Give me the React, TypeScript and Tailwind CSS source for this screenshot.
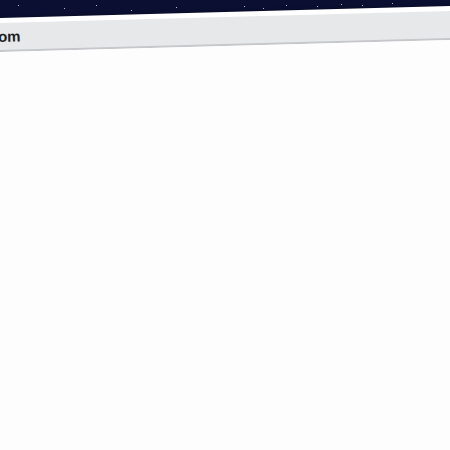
import React from 'react'

const stars = [
  { x: 18, y: 5 }, { x: 64, y: 8 }, { x: 96, y: 5 }, { x: 131, y: 10 },
  { x: 176, y: 7 }, { x: 244, y: 6 }, { x: 263, y: 8 }, { x: 286, y: 5 },
  { x: 317, y: 6 }, { x: 341, y: 4 }, { x: 362, y: 5 }, { x: 392, y: 3 },
]

function App() {
  return (
    <div className="relative h-[450px] w-[450px] overflow-hidden bg-[#0b1033] pt-[12px]" style={{ fontFamily: '"Liberation Sans", Arial, sans-serif' }}>
      {stars.map((s, i) => (
        <div key={i} className="absolute h-px w-px bg-white/70" style={{ left: s.x, top: s.y }} />
      ))}
      <div className="-ml-[75px] w-[600px] origin-top rotate-[-1.53deg] bg-white pt-[5px] shadow-[0_-1px_3px_rgba(0,0,0,0.3)]">
        <div className="flex h-[29px] items-center border-b-2 border-[#c6c7ca] bg-[#e7e8ea]">
          <div className="flex w-[95px] shrink-0 justify-end">
            <span className="whitespace-nowrap text-[15px] font-bold leading-none text-[#1e1e1e]">yourwebsite.com</span>
          </div>
        </div>
        <div className="h-[560px] bg-[#fdfdfd]" />
      </div>
    </div>
  )
}

export default App
